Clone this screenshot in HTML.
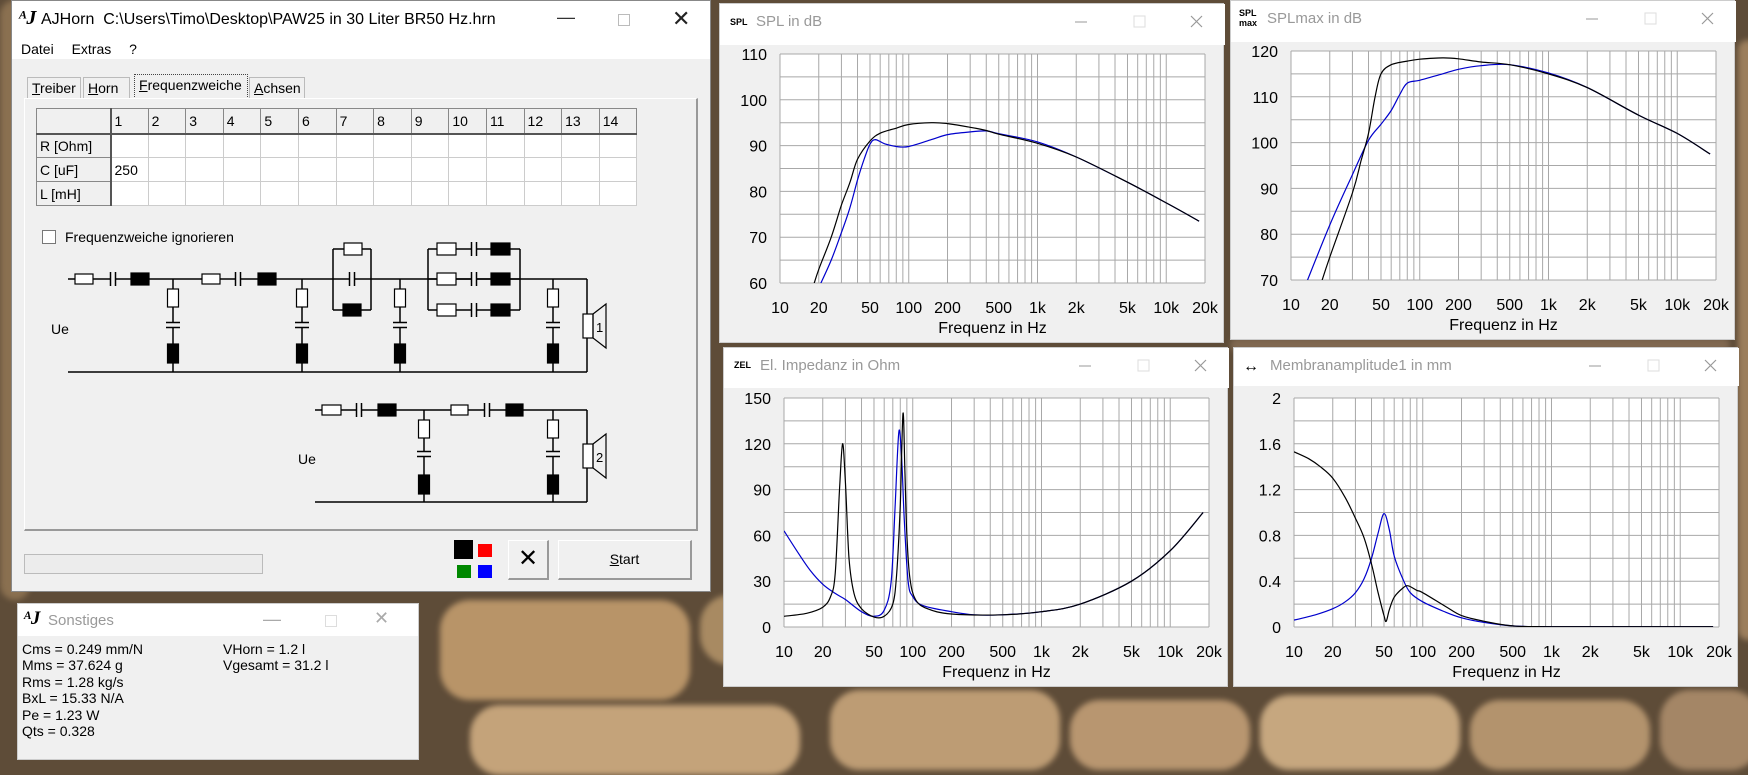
<!DOCTYPE html>
<html><head><meta charset="utf-8">
<style>
*{margin:0;padding:0;box-sizing:border-box}
body{width:1748px;height:765px;overflow:hidden;position:relative;font-family:"Liberation Sans",Arial,sans-serif;background:#5e4c38}
.st{position:absolute;border-radius:30px;filter:blur(3px)}
.win{position:absolute;background:#f0f0f0;border:1px solid #9a9a9a}
.tb{position:absolute;left:0;right:0;top:0;background:#fff}
.ttl{position:absolute;font-size:15px;color:#999;white-space:nowrap}
.ctl{position:absolute;color:#aaa;font-size:18px}
svg text{font-family:"Liberation Sans",Arial,sans-serif}
.menu span{margin-right:14px}
.tab{position:absolute;top:76px;height:22px;font-size:14px;border:1px solid #bbb;border-bottom:none;background:#f0f0f0;padding:2px 4px;text-decoration:none}
.tab u{text-decoration:underline}
</style></head><body>
<div class="st" style="left:0;top:0;width:30px;height:600px;background:#8a7050"></div>
<div class="st" style="left:440px;top:600px;width:250px;height:100px;background:#b89468"></div>
<div class="st" style="left:700px;top:595px;width:110px;height:70px;background:#a88a62"></div>
<div class="st" style="left:470px;top:705px;width:330px;height:70px;background:#c4a37a"></div>
<div class="st" style="left:830px;top:690px;width:230px;height:80px;background:#bd9c74"></div>
<div class="st" style="left:1070px;top:700px;width:180px;height:70px;background:#b89670"></div>
<div class="st" style="left:1260px;top:695px;width:200px;height:75px;background:#c6a77f"></div>
<div class="st" style="left:1470px;top:700px;width:180px;height:70px;background:#b3936d"></div>
<div class="st" style="left:1660px;top:690px;width:100px;height:80px;background:#a48666"></div>
<div class="st" style="left:1738px;top:40px;width:20px;height:600px;background:#9c7e5c"></div>
<div class="st" style="left:1230px;top:338px;width:500px;height:14px;background:#806850"></div>

<div class="win" style="left:11px;top:0;width:700px;height:592px;border-color:#888">
  <div class="tb" style="height:58px"></div>
  <div style="position:absolute;left:6px;top:6px;font-family:'Liberation Serif',serif;font-style:italic;font-size:20px;font-weight:bold">ᴬJ</div>
  <div style="position:absolute;left:29px;top:10px;font-size:16px;color:#000;white-space:nowrap">AJHorn&nbsp; C:\Users\Timo\Desktop\PAW25 in 30 Liter BR50 Hz.hrn</div>
  <div class="ctl" style="left:545px;top:6px;color:#333">—</div>
  <div style="position:absolute;left:606px;top:13px;width:12px;height:12px;border:1px solid #bbb"></div>
  <div class="ctl" style="left:660px;top:5px;color:#222;font-size:22px">✕</div>
  <div class="menu" style="position:absolute;left:9px;top:40px;font-size:14px"><span>Datei</span> <span>Extras</span> <span>?</span></div>
  <div class="tab" style="left:15px;width:54px"><u>T</u>reiber</div>
  <div class="tab" style="left:71px;width:47px"><u>H</u>orn</div>
  <div class="tab" style="left:122px;width:114px;top:73px;height:25px;border:1px dotted #444;border-bottom:none"><u>F</u>requenzweiche</div>
  <div class="tab" style="left:237px;width:56px"><u>A</u>chsen</div>
  <div style="position:absolute;left:12px;top:97px;width:674px;height:433px;border:1px solid #fff;border-right:2px solid #999;border-bottom:2px solid #999"></div>
  <svg style="position:absolute;left:0;top:0" width="700" height="592" id="ckt"></svg>
  <div id="tbl" style="position:absolute;left:24px;top:107px"></div>
  <div style="position:absolute;left:30px;top:229px;width:14px;height:14px;border:1px solid #777;background:#fff"></div>
  <div style="position:absolute;left:53px;top:228px;font-size:14px">Frequenzweiche ignorieren</div>
  <div style="position:absolute;left:12px;top:553px;width:239px;height:20px;border:1px solid #bbb;background:#ececec"></div>
  <div style="position:absolute;left:442px;top:539px;width:19px;height:19px;background:#000"></div>
  <div style="position:absolute;left:466px;top:543px;width:14px;height:13px;background:#f00"></div>
  <div style="position:absolute;left:445px;top:564px;width:14px;height:13px;background:#080"></div>
  <div style="position:absolute;left:466px;top:564px;width:14px;height:13px;background:#00f"></div>
  <div style="position:absolute;left:496px;top:539px;width:41px;height:40px;border:1px solid #fff;border-right:2px solid #999;border-bottom:2px solid #999;font-size:24px;text-align:center;line-height:36px">✕</div>
  <div style="position:absolute;left:546px;top:539px;width:134px;height:40px;border:1px solid #fff;border-right:2px solid #999;border-bottom:2px solid #999;font-size:14px;text-align:center;line-height:37px"><u>S</u>tart</div>
</div>

<div class="win" style="left:17px;top:603px;width:402px;height:157px;border-color:#ccc">
  <div class="tb" style="height:32px"></div>
  <div style="position:absolute;left:5px;top:4px;font-family:'Liberation Serif',serif;font-style:italic;font-size:19px;font-weight:bold">ᴬJ</div>
  <div class="ttl" style="left:30px;top:8px">Sonstiges</div>
  <div class="ctl" style="left:245px;top:5px">—</div>
  <div style="position:absolute;left:307px;top:11px;width:12px;height:12px;border:1px solid #ddd"></div>
  <div class="ctl" style="left:356px;top:4px">✕</div>
  <div style="position:absolute;left:4px;top:37px;font-size:14px;line-height:16.4px">Cms = 0.249 mm/N<br>Mms = 37.624 g<br>Rms = 1.28 kg/s<br>BxL = 15.33 N/A<br>Pe = 1.23 W<br>Qts = 0.328</div>
  <div style="position:absolute;left:205px;top:37px;font-size:14px;line-height:16.4px">VHorn = 1.2 l<br>Vgesamt = 31.2 l</div>
</div>

<div id="charts"></div>

<script>
(function(){
 var h='<table style="border-collapse:collapse;font-size:14px;background:#fff">';
 var rows=['', 'R [Ohm]','C [uF]','L [mH]'];
 for(var r=0;r<4;r++){
  h+='<tr style="height:'+(r==0?25:24)+'px">';
  for(var c=0;c<15;c++){
   var hdr=(r==0||c==0);
   var txt=r==0?(c==0?'':c):(c==0?rows[r]:(r==2&&c==1?'250':''));
   h+='<td style="width:'+(c==0?74:37.6)+'px;border:1px solid '+(hdr?'#888':'#ccc')+';background:'+(hdr?'#f0f0f0':'#fff')+';padding:0 3px;'+(hdr&&r==0?'border-bottom:2px solid #555;':'')+(c==0?'border-right:2px solid #555;':'')+'">'+txt+'</td>';
  }
  h+='</tr>';
 }
 document.getElementById('tbl').innerHTML=h+'</table>';
})();

(function(){
 var s='';
 function L(x1,y1,x2,y2){s+='<line x1="'+x1+'" y1="'+y1+'" x2="'+x2+'" y2="'+y2+'" stroke="#000" stroke-width="1.5"/>';}
 function R(x,y,w,h,f){s+='<rect x="'+x+'" y="'+y+'" width="'+w+'" height="'+h+'" fill="'+(f?'#000':'#fff')+'" stroke="#000" stroke-width="1.2"/>';}
 function Cs(x,y){s+='<rect x="'+(x-3)+'" y="'+(y-7)+'" width="6" height="14" fill="#f0f0f0"/>';L(x-2.5,y-7,x-2.5,y+7);L(x+2.5,y-7,x+2.5,y+7);}
 function Cv(x,y){s+='<rect x="'+(x-7)+'" y="'+(y-3)+'" width="14" height="6" fill="#f0f0f0"/>';L(x-7,y-2.5,x+7,y-2.5);L(x-7,y+2.5,x+7,y+2.5);}
 function shunt(x,y1,y2,ry,cy,ly){L(x,y1,x,y2);R(x-5.5,ry,11,18,0);Cv(x,cy);R(x-5.5,ly,11,19,1);}
 function spk(x,yb,n){R(x-4,yb,10,24,0);s+='<polygon points="'+(x+6)+','+yb+' '+(x+19)+','+(yb-10)+' '+(x+19)+','+(yb+34)+' '+(x+6)+','+(yb+24)+'" fill="none" stroke="#000" stroke-width="1.2"/>';s+='<text x="'+(x+9)+'" y="'+(yb+18)+'" font-size="13">'+n+'</text>';}
 var o=-11,y=278,b=371;
 L(67+o,y,586+o,y);L(67+o,b,586+o,b);L(586+o,y,586+o,b);
 R(74+o,y-5,18,10,0);Cs(112+o,y);R(130+o,y-6,18,12,1);
 R(201+o,y-5,18,10,0);Cs(237+o,y);R(257+o,y-6,18,12,1);
 shunt(172+o,y,b,288,324,343);shunt(301+o,y,b,288,324,343);shunt(399+o,y,b,288,324,343);shunt(552+o,y,b,288,324,343);
 L(332+o,248,332+o,309);L(370+o,248,370+o,309);L(332+o,248,370+o,248);L(332+o,309,370+o,309);
 R(343+o,242,18,12,0);Cs(351+o,y);R(342+o,303,18,12,1);
 L(427+o,248,427+o,309);L(519+o,248,519+o,309);
 [248,278,309].forEach(function(yy){L(427+o,yy,519+o,yy);R(436+o,yy-6,19,12,0);Cs(473+o,yy);R(490+o,yy-6,19,12,1);});
 spk(586+o,313,'1');
 s+='<text x="'+(50+o)+'" y="333" font-size="14">Ue</text>';
 y=409;b=501;
 L(314+o,y,586+o,y);L(314+o,b,586+o,b);L(586+o,y,586+o,b);
 R(321+o,y-5,19,10,0);Cs(358+o,y);R(377+o,y-6,18,12,1);
 R(450+o,y-5,17,10,0);Cs(486+o,y);R(505+o,y-6,17,12,1);
 shunt(423+o,y,b,419,453,474);shunt(552+o,y,b,419,453,474);
 spk(586+o,443,'2');
 s+='<text x="'+(297+o)+'" y="463" font-size="14">Ue</text>';
 document.getElementById('ckt').innerHTML=s;
})();

function smooth(P){
 var d='M'+P[0][0].toFixed(1)+','+P[0][1].toFixed(1);
 for(var i=0;i<P.length-1;i++){
  var p0=P[i>0?i-1:i],p1=P[i],p2=P[i+1],p3=P[i+2<P.length?i+2:i+1];
  var c1x=p1[0]+(p2[0]-p0[0])/6,c1y=p1[1]+(p2[1]-p0[1])/6;
  var c2x=p2[0]-(p3[0]-p1[0])/6,c2y=p2[1]-(p3[1]-p1[1])/6;
  d+=' C'+c1x.toFixed(1)+','+c1y.toFixed(1)+' '+c2x.toFixed(1)+','+c2y.toFixed(1)+' '+p2[0].toFixed(1)+','+p2[1].toFixed(1);
 }
 return d;
}
function chart(cfg){
 var W=505,H=340,px=60,py=50,pw=425,ph=229;
 var d=document.createElement('div');d.className='win';
 d.style.cssText='left:'+cfg.x+'px;top:'+cfg.y+'px;width:'+W+'px;height:'+H+'px;border-color:#ccc';
 var s='<svg width="'+W+'" height="'+H+'">';
 s+='<rect x="0" y="0" width="'+W+'" height="'+(cfg.tb)+'" fill="#fff"/>';
 s+=cfg.icon;
 s+='<text x="'+cfg.tx+'" y="22" font-size="15" fill="#999">'+cfg.title+'</text>';
 s+='<line x1="355" y1="18" x2="367" y2="18" stroke="#999"/>';
 s+='<rect x="414" y="12" width="11" height="11" fill="none" stroke="#ddd"/>';
 s+='<path d="M471 12 L482 23 M482 12 L471 23" stroke="#999" stroke-width="1.2"/>';
 s+='<rect x="'+px+'" y="'+py+'" width="'+pw+'" height="'+ph+'" fill="#fff"/>';
 var dec=pw/Math.log10(2000);
 function X(f){return px+Math.log10(f/10)*dec;}
 var n=cfg.n;
 function Y(v){return py+ph-(v-cfg.ymin)/(cfg.ymax-cfg.ymin)*ph;}
 for(var i=0;i<=n;i++){var yy=py+ph*i/n;s+='<line x1="'+px+'" y1="'+yy+'" x2="'+(px+pw)+'" y2="'+yy+'" stroke="#a8a8a8"/>';}
 for(var e=10;e<=10000;e*=10)for(var k=1;k<=9;k++){var f=e*k;if(f>20000)break;var xx=X(f);s+='<line x1="'+xx+'" y1="'+py+'" x2="'+xx+'" y2="'+(py+ph)+'" stroke="#a8a8a8"/>';}
 s+='<line x1="'+X(20000)+'" y1="'+py+'" x2="'+X(20000)+'" y2="'+(py+ph)+'" stroke="#a8a8a8"/>';
 cfg.labels.forEach(function(l){s+='<text x="47" y="'+(Y(l[0])+6)+'" font-size="16" text-anchor="end">'+l[1]+'</text>';});
 [[10,'10'],[20,'20'],[50,'50'],[100,'100'],[200,'200'],[500,'500'],[1000,'1k'],[2000,'2k'],[5000,'5k'],[10000,'10k'],[20000,'20k']].forEach(function(l){s+='<text x="'+X(l[0])+'" y="'+(py+ph+30)+'" font-size="16" text-anchor="middle">'+l[1]+'</text>';});
 s+='<text x="'+(px+pw/2)+'" y="'+(py+ph+50)+'" font-size="16" text-anchor="middle">Frequenz in Hz</text>';
 s+='<defs><clipPath id="c'+cfg.id+'"><rect x="'+px+'" y="'+py+'" width="'+pw+'" height="'+ph+'"/></clipPath></defs>';
 cfg.curves.forEach(function(c){
  var P=c.p.map(function(p){return [X(p[0]),Y(p[1])];});
  s+='<path clip-path="url(#c'+cfg.id+')" d="'+smooth(P)+'" fill="none" stroke="'+c.c+'" stroke-width="1.2" stroke-linejoin="round"/>';
 });
 d.innerHTML=s+'</svg>';
 document.getElementById('charts').appendChild(d);
}
function lab(a,b,st,fmt){var r=[];for(var v=a;v<=b+1e-9;v+=st)r.push([v,fmt?fmt(v):String(Math.round(v))]);return r;}
var splTail=[[500,92.5],[1000,90.5],[2000,87.5],[5000,82],[10000,77.5],[18000,73.5]];
chart({id:1,x:719,y:3,tb:41,tx:36,title:'SPL in dB',icon:'<text x="10" y="21" font-size="9" font-weight="bold">SPL</text>',
 ymin:60,ymax:110,n:10,labels:lab(60,110,10),
 curves:[{c:'#0000cc',p:[[20,59],[25,65],[30,71],[35,76.5],[40,82.5],[45,87],[50,90.3],[55,91.3],[65,90.4],[80,89.8],[100,89.8],[150,91.3],[200,92.4],[300,93],[400,93.2],[500,92.6],[1000,90.8],[2000,87.5],[5000,82],[10000,77.5],[18000,73.5]]},
 {c:'#000',p:[[18,59],[20,63],[25,70],[30,77],[35,82],[40,87],[50,91],[60,92.7],[80,93.8],[100,94.6],[150,95],[200,94.8],[300,94],[400,93.3]].concat(splTail)}]});
chart({id:2,x:1230,y:0,tb:41,tx:36,title:'SPLmax in dB',icon:'<text x="8" y="15" font-size="9" font-weight="bold">SPL</text><text x="8" y="25" font-size="9" font-weight="bold">max</text>',
 ymin:70,ymax:120,n:10,labels:lab(70,120,10),
 curves:[{c:'#0000cc',p:[[13,69],[20,82],[30,93],[40,100.5],[50,104],[60,107],[70,110.5],[80,113],[100,113.6],[150,115],[200,116],[300,116.8],[500,117],[1000,115.2],[2000,112],[5000,106],[10000,102],[18000,97.5]]},
 {c:'#000',p:[[17,69],[20,75],[30,89],[35,96],[40,102],[45,110],[50,115],[60,117],[80,117.8],[100,118.2],[150,118.5],[200,118.3],[300,117.6],[500,117],[1000,115],[2000,112],[5000,106],[10000,102],[18000,97.5]]}]});
chart({id:3,x:723,y:347,tb:40,tx:36,title:'El. Impedanz in Ohm',icon:'<text x="10" y="20" font-size="9" font-weight="bold">ZEL</text>',
 ymin:0,ymax:150,n:10,labels:lab(0,150,30),
 curves:[{c:'#0000cc',p:[[10,63],[13,48],[16,37],[20,28],[25,22],[30,18],[40,10],[50,7],[60,11],[68,30],[73,80],[78,128],[82,110],[86,70],[92,30],[100,20],[120,14],[200,10],[300,8],[500,8],[1000,10],[2000,15],[5000,30],[10000,50],[18000,75]]},
 {c:'#000',p:[[10,7],[15,9],[20,13],[23,20],[25,35],[27,90],[28.5,120],[30,95],[32,45],[35,22],[40,12],[50,6.5],[60,7],[70,15],[75,35],[80,80],[84,140],[87,100],[90,60],[95,32],[105,18],[130,12],[200,8.5],[500,8],[1000,10],[2000,15],[5000,30],[10000,50],[18000,75]]}]});
chart({id:4,x:1233,y:347,tb:38,tx:36,title:'Membranamplitude1 in mm',icon:'<text x="9" y="23" font-size="16">↔</text>',
 ymin:0,ymax:2,n:10,labels:lab(0,2,0.4,function(v){v=Math.round(v*10)/10;return v==0?'0':(v==2?'2':String(v));}),
 curves:[{c:'#0000cc',p:[[10,0.06],[15,0.11],[20,0.16],[25,0.22],[30,0.3],[35,0.42],[40,0.6],[45,0.82],[50,0.99],[55,0.85],[60,0.62],[70,0.42],[80,0.3],[100,0.22],[150,0.13],[200,0.08],[300,0.04],[500,0.01],[1000,0.003],[18000,0.003]]},
 {c:'#000',p:[[10,1.53],[13,1.47],[16,1.4],[20,1.3],[25,1.13],[30,0.95],[35,0.78],[40,0.55],[45,0.3],[50,0.1],[52,0.05],[55,0.15],[60,0.26],[70,0.34],[77,0.36],[90,0.32],[100,0.3],[150,0.18],[200,0.1],[300,0.05],[500,0.01],[1000,0.003],[18000,0.003]]}]});
</script>
</body></html>
